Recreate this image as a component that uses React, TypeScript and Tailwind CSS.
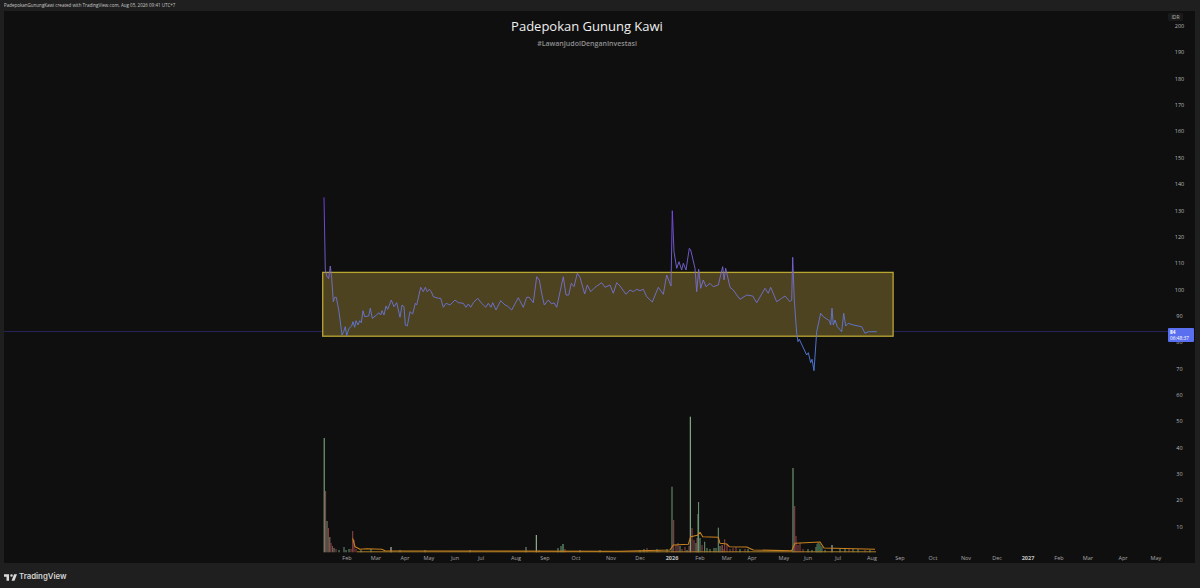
const z3 = [42,22,46,240,50,258,56,266,61,228,65,265,70,335,74,322,79,322,87,365,96,435,101,425,106,410,110,437,117,415,125,408,129,395,134,412,138,392,144,405,149,392,154,398,159,362,164,380,176,378,181,355,187,385,200,375,206,368,212,375,216,362,222,375,228,348,233,358,244,330,252,350,260,338,270,382,276,345,282,350,286,405,292,408,300,365,308,372,316,340,320,345,332,292,340,305,346,292,352,305,358,298,364,305,370,320,385,325,392,325,400,352,408,340,420,345,435,330,445,338,460,340,468,352,475,342,482,352,490,338,503,325,515,340,527,352,535,340,543,352,548,338,558,360,572,332,585,345,592,348,605,360,625,323,640,352,650,322,658,322,670,338,680,260,688,270,696,315,703,345,715,330,725,342,732,338,740,352,760,260,768,315,776,315,784,280,792,290,802,250,810,262,824,312,832,285,842,305,855,292,875,278,885,292,900,285];
const z4 = [0,248,10,255,20,262,30,258,40,280,50,248,60,258,78,283,90,270,100,275,110,268,120,272,130,268,140,290,157,306,175,262,190,283,200,225,213,258,217,32,222,155,230,205,237,185,245,210,250,190,258,210,268,145,272,150,285,205,290,275,296,208,302,265,310,240,318,260,330,250,340,260,355,255,368,200,372,240,377,205,390,262,400,270,410,285,420,298,440,285,458,288,470,308,495,265,505,280,512,262,530,305,545,295,555,288,570,305,575,300,578,172,583,300,590,400,594,425,598,418,620,465,625,458,632,488,636,478,642,512,650,395,662,340,670,350,688,362,692,375,696,325,700,375,705,360,712,380,725,395,731,340,737,378,745,370,760,375,785,380,795,400,805,395,815,395,830,395];

function toPoints(arr: number[], ox: number, oy: number, fromX = -1) {
  const out: string[] = [];
  for (let i = 0; i < arr.length; i += 2) {
    if (arr[i] < fromX) continue;
    out.push(`${(ox + arr[i] / 3).toFixed(1)},${(oy + arr[i + 1] / 3).toFixed(1)}`);
  }
  return out;
}
const linePts = [...toPoints(z3, 310, 190), ...toPoints(z4, 600, 200, 31)].join(" ");

const maZ5 = [128,325,135,350,150,358,170,356,215,358,225,362,900,364];
const maZ6 = [0,424,150,420,160,405,205,403,212,380,232,376,240,367,248,380,295,382,300,400,320,402,328,410,380,411,400,420,515,422,525,400,600,396,612,414,765,418];
const maPts = [...toPoints(maZ5, 310, 430), ...toPoints(maZ6, 620, 410)].join(" ");

const G = "#6f9a78";
const R = "#94464a";
// [x, top, colour]
const bars: [number, number, string][] = [
  [324.2, 438, "#86b98f"], [325.6, 491, R], [327, 521, "#8a8f78"], [328.4, 528, R], [329.8, 537, "#7d8a72"], [331, 543, R], [332.5, 546, R], [334, 548, G], [336, 549, R], [339, 550, G], [344, 547, "#6f8a76"], [346, 550, G], [349, 549, G], [351, 549, R], [352.7, 531, R], [354, 540, R],
  [356, 549, R], [361, 550, G], [371, 549, G], [391, 547, "#cfd6cc"], [400, 550, G], [425, 550, G], [470, 550, G],
  [526, 547, "#7f9a85"], [536.3, 535, "#a7d0ab"], [539, 550, R], [558, 548, G], [561, 546, G], [563, 544, "#7fbf88"], [565, 549, R], [580, 550, G], [600, 550, G], [640, 550, G],
  [644, 549, G], [647, 548, R], [657, 549, G], [659, 550, R], [667, 549, G],
  [672, 486.7, G], [673.7, 520, R], [676, 545, R], [678, 543, R], [680, 546, G], [682, 549, R], [685, 547, R], [687, 550, G], [689, 546, R],
  [690.3, 416.7, "#9ac8a0"], [692, 528, R], [694, 540, R], [696, 543, G], [697, 538, R], [698, 514, G], [698.6, 502, G], [700, 538, G], [702, 545, R], [704.7, 541.7, G],
  [707, 548, G], [710, 549, G], [714, 548, G], [716, 548, G], [718.3, 527.7, G], [720, 546, G], [722, 545, R], [724, 549, R], [722.3, 545, R], [724.7, 539.3, R], [727, 545, R], [730, 549, R], [733, 548, R], [736, 547, R], [740, 549, G], [745, 549, R], [748, 549, G],
  [793, 468, "#7fae86"], [794.7, 506, R], [796, 536, R], [798, 545, R], [800, 543, R], [803, 549, R], [808, 549, G], [812, 550, G], [816, 547, G],
  [817, 544, "#4f7a5a"], [818, 543, "#4f7a5a"], [819, 543, "#4f7a5a"], [820, 544, "#4f7a5a"], [821, 546, "#4f7a5a"], [822, 547, "#4f7a5a"], [825, 550, G], [832, 545, "#b9c8b5"], [840, 549, G], [845, 549, G], [849, 548, R], [853, 549, G], [858, 549, G], [865, 550, R], [870, 550, G],
];

const prices = [200,190,180,170,160,150,140,130,120,110,100,90,80,70,60,50,40,30,20,10];
const times: [string, number, boolean][] = [
  ["Feb",347,false],["Mar",376,false],["Apr",405,false],["May",429,false],["Jun",455,false],["Jul",481,false],["Aug",516,false],["Sep",545,false],["Oct",576,false],["Nov",611,false],["Dec",640,false],["2026",672,true],["Feb",700,false],["Mar",727,false],["Apr",752,false],["May",784,false],["Jun",808,false],["Jul",838,false],["Aug",872,false],["Sep",900,false],["Oct",933,false],["Nov",966,false],["Dec",997,false],["2027",1028,true],["Feb",1059,false],["Mar",1088,false],["Apr",1123,false],["May",1156,false],
];

export default function App() {
  return (
    <div className="flex h-[588px] w-[1200px] flex-col overflow-hidden bg-[#1f1f1f] font-['Open_Sans','Noto_Sans',sans-serif] text-[#c4c4c4]">
      <div className="flex h-[11px] shrink-0 items-center pl-[4px] text-[4.5px] leading-none text-[#c9c9c9]">
        PadepokanGunungKawi created with TradingView.com, Aug 05, 2026 09:41 UTC+7
      </div>

      <div className="relative ml-[4px] mr-[5px] flex h-[552px] shrink-0 bg-[#0f0f0f]">
        <div className="relative min-w-0 flex-1">
          <div className="absolute top-[5px] left-0 right-[-2px] flex flex-col items-center">
            <div className="text-[13px] leading-[20px] text-[#f0f0f0]">Padepokan Gunung Kawi</div>
            <div className="mt-[3px] text-[7px] leading-[10px] font-semibold text-[#8f8f8f]">#LawanJudolDenganInvestasi</div>
          </div>

          <svg className="absolute top-0 left-0" width="1164" height="552" viewBox="4 11 1164 552">
            <defs>
              <linearGradient id="lineGrad" gradientUnits="userSpaceOnUse" x1="0" y1="197" x2="0" y2="371">
                <stop offset="0" stopColor="#7a3ff2" />
                <stop offset="0.5" stopColor="#7670d0" />
                <stop offset="1" stopColor="#4a7fe6" />
              </linearGradient>
            </defs>
            <line x1="4" x2="1168" y1="331.5" y2="331.5" stroke="#24245c" strokeWidth="1" />
            <rect x="322.7" y="272.4" width="570.4" height="63.8" fill="#4e4320" stroke="#b9a631" strokeWidth="1.3" />
            <polyline points={linePts} fill="none" stroke="url(#lineGrad)" strokeWidth="1" strokeLinejoin="round" opacity="0.9" />
            {bars.map(([x, top, c], i) => (
              <line key={i} x1={x} x2={x} y1={top} y2={552.3} stroke={c} strokeWidth="1" />
            ))}
            <line x1="357" x2="876" y1="551.8" y2="551.8" stroke="#a87c28" strokeWidth="1" />
            <polyline points={maPts} fill="none" stroke="#c9821f" strokeWidth="1.1" strokeLinejoin="round" />
          </svg>

          {times.map(([label, x, bold], i) => (
            <span
              key={i}
              className={bold ? "absolute top-[544px] -translate-x-1/2 text-[5.5px] leading-[7px] font-bold text-[#c4c4c4]" : "absolute top-[544px] -translate-x-1/2 text-[5.5px] leading-[7px] text-[#a8a8a8]"}
              style={{ left: x - 4 }}
            >
              {label}
            </span>
          ))}
        </div>

        <div className="relative flex h-[520px] w-[27px] shrink-0 flex-col items-center justify-between pt-[12px] text-[5.5px] leading-[7px] text-[#b8b8b8]">
          {prices.map((p) => (
            <span key={p} className="h-[7px] pr-[4px]">{p}</span>
          ))}
          <div className="absolute top-[2px] left-0 flex h-[8px] w-[15px] items-center justify-center rounded-[1px] bg-[#1a1a1a] text-[5px] text-[#b8b8b8]">IDR</div>
          <div className="absolute top-[317px] left-0 flex h-[14px] w-[26px] flex-col justify-center rounded-[1px] bg-[#5a6ef0] pl-[2px] text-[4.8px] leading-[6px] text-white">
            <span className="font-bold">84</span>
            <span>06:48:37</span>
          </div>
        </div>
      </div>

      <div className="flex flex-1 items-center gap-[2px] pl-[4px] pt-[3px]">
        <svg width="13" height="7" viewBox="2 6 31 15" fill="#d9d9d9">
          <path d="M14 6H2v6h6v9h6V6Zm13 15h-7l6-15h7l-6 15Zm-7-9a3 3 0 1 0 0-6 3 3 0 0 0 0 6Z" />
        </svg>
        <span className="font-['Inter',sans-serif] text-[7.8px] leading-none font-semibold text-[#d4d4d4]">TradingView</span>
      </div>
    </div>
  );
}
